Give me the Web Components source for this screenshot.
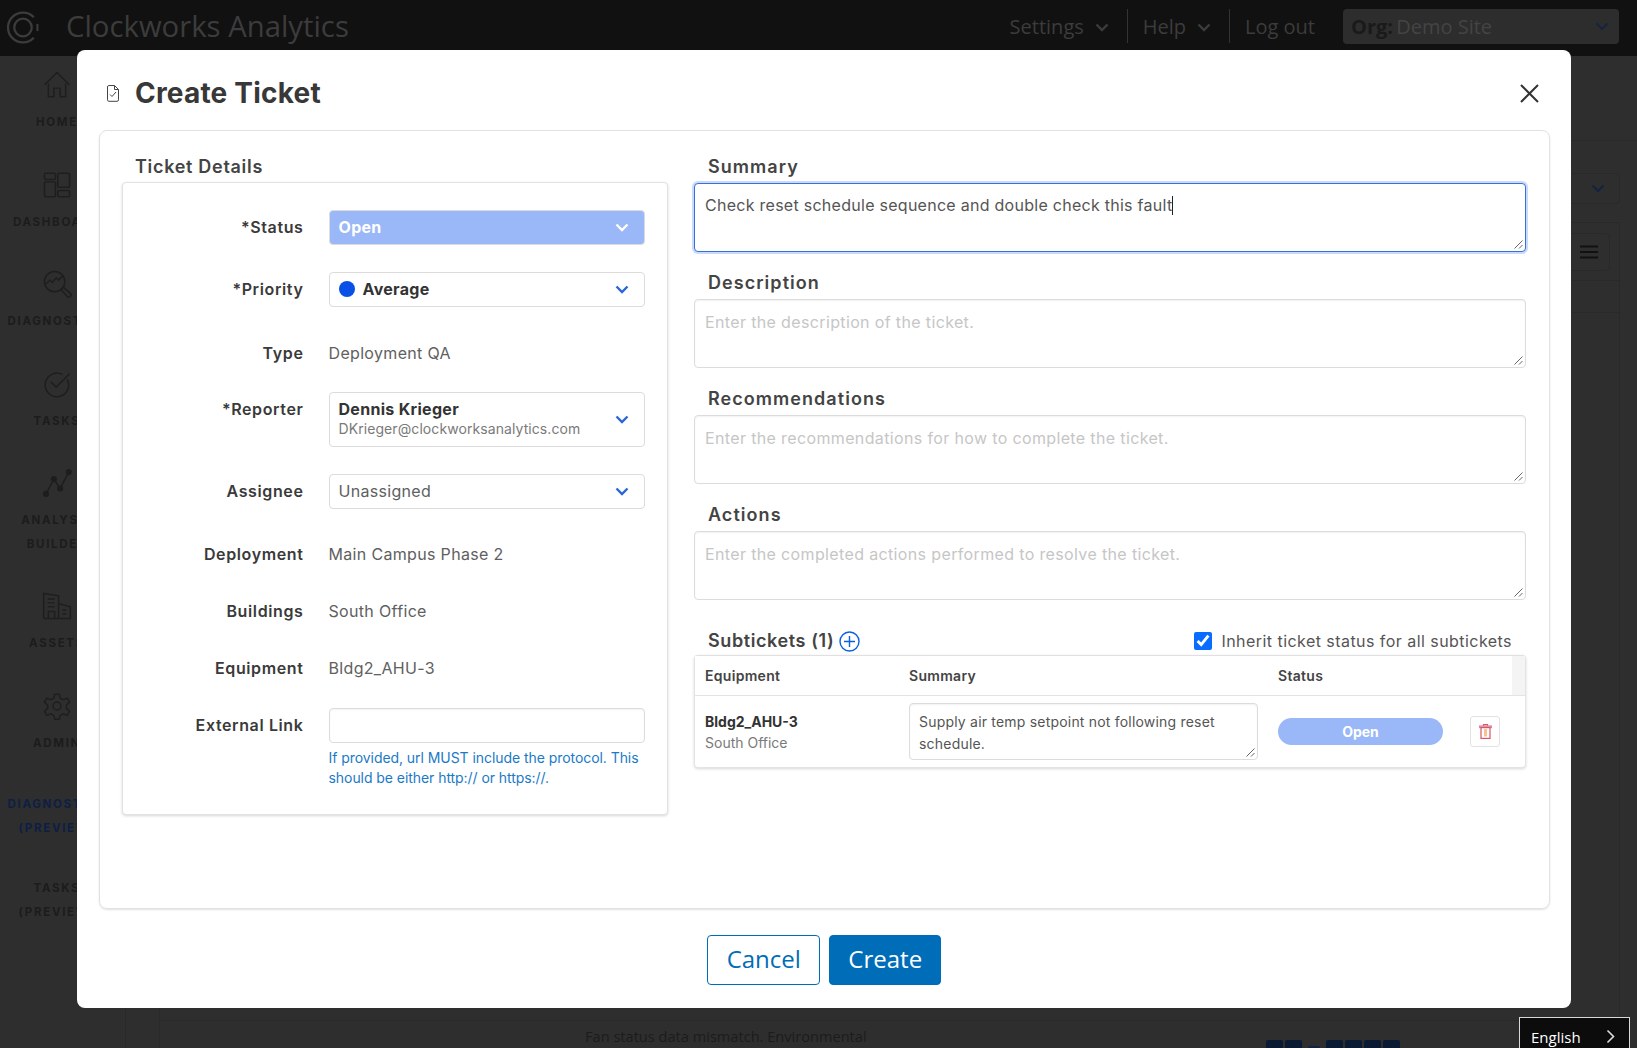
<!doctype html>
<html>
<head>
<meta charset="utf-8">
<title>Create Ticket</title>
<style>
  html, body { margin: 0; height: 100%; overflow: hidden; background: #2e2e2e; }
  body { font-family: Inter, "Liberation Sans", sans-serif; }
</style>
</head>
<body>
<app-shell>
  <ticket-modal></ticket-modal>
</app-shell>

<script>
class ShadowEl extends HTMLElement {
  connectedCallback() {
    if (this.shadowRoot) return
    this.attachShadow({ mode: 'open' })
    this.shadowRoot.innerHTML = `<style>${this.css()}</style>${this.html()}`
  }
  attr(name, fallback = '') {
    return this.getAttribute(name) || fallback
  }
}

const chevron = (color, width = 2.4) => `
  <svg width="14" height="9" viewBox="0 0 14 9" fill="none" stroke="${color}" stroke-width="${width}">
    <path d="M1.5 1.5 7 7l5.5-5.5"/>
  </svg>`

const sideIcons = {
  home: '<path d="M2 18 18 2l16 16M7 16v17h7V22h8v11h7V16"/>',
  dashboard: '<rect x="2" y="3" width="14" height="8" rx="1.5"/><rect x="2" y="14" width="14" height="19" rx="1.5"/><rect x="19" y="3" width="15" height="18" rx="1.5"/><rect x="19" y="25" width="15" height="8" rx="1.5"/>',
  diagnostics: '<circle cx="15" cy="15" r="13"/><path d="M4 18l5-5 3 3 5-6 3 3 6-6M23 25l3-3 9 8a2 2 0 0 1-4 4z"/>',
  tasks: '<path d="M31 12a15 15 0 1 1-6-6"/><path d="M10 15l7 7L34 5"/>',
  analysis: '<circle cx="4" cy="32" r="3" fill="#1e1e1e"/><circle cx="14" cy="13" r="3" fill="#1e1e1e"/><circle cx="22" cy="25" r="3" fill="#1e1e1e"/><circle cx="33" cy="4" r="3" fill="#1e1e1e"/><path d="M4 32 14 13l8 12L33 4"/>',
  assets: '<path d="M1 34V2l19 3v29M20 15l15 4v15H1M7 34v-9h8v9M6 9h9M6 14h9M6 19h9M25 23h5M25 28h5"/>',
  admin: '<circle cx="18" cy="18" r="5"/><path d="M15 3h6l1 5 4 2 5-2 3 5-4 4v4l4 4-3 5-5-2-4 2-1 5h-6l-1-5-4-2-5 2-3-5 4-4v-4l-4-4 3-5 5 2 4-2z"/>'
}

customElements.define('side-item', class extends ShadowEl {
  css() {
    return `
      :host { display: flex; flex-direction: column; align-items: center; width: 114px; }
      svg { display: block; margin-bottom: 8px; }
      .label {
        font: 700 11.5px/23.5px Inter, sans-serif; letter-spacing: 1.7px; color: var(--label, #1c1c1c);
        text-align: center; white-space: nowrap;
      }
    `
  }
  html() {
    const icon = sideIcons[this.attr('icon')]
    const lines = this.attr('label').split('|')
    return `
      ${icon ? `<svg width="36" height="36" viewBox="-5 -5 46 46" fill="none" stroke="#1e1e1e" stroke-width="1.9">${icon}</svg>` : ''}
      ${lines.map((line) => `<div class="label">${line}</div>`).join('')}
    `
  }
})

customElements.define('top-bar', class extends ShadowEl {
  css() {
    return `
      :host {
        display: flex; align-items: center; box-sizing: border-box; height: 56px; padding-bottom: 4px; background: #111;
        color: #3c3c3c; font: 400 20px "Open Sans", sans-serif;
      }
      .logo { margin: 3px 0 0 7px; }
      .brand { margin-left: 26px; font: 400 29.3px "Open Sans", sans-serif; }
      .spacer { flex: 1; }
      .item { display: flex; align-items: center; gap: 11px; }
      .item svg { margin-top: 3px; }
      .rule { width: 1px; height: 34px; background: #333; margin: 0 15px 0 18px; }
      .org {
        display: flex; align-items: center; justify-content: space-between; box-sizing: border-box;
        width: 276px; height: 35px; margin: 0 18px 0 28px; padding: 0 10px 0 8px; background: #2d2d2d;
        border-radius: 4px; color: #444;
      }
      .org b { color: #1a1a1a; margin-right: -2px; }
    `
  }
  html() {
    return `
      <svg class="logo" width="33" height="33" viewBox="0 0 32 32" fill="none" stroke="#3c3c3c" stroke-width="2.2">
        <path d="M26 26A14.5 14.5 0 1 1 26 6"/>
        <path d="M29.5 12.5v7" stroke-width="2"/>
        <circle cx="15.5" cy="16" r="8.5"/>
      </svg>
      <div class="brand">Clockworks Analytics</div>
      <div class="spacer"></div>
      <div class="item">Settings ${chevron('#3c3c3c')}</div>
      <div class="rule"></div>
      <div class="item">Help ${chevron('#3c3c3c')}</div>
      <div class="rule"></div>
      <div class="item">Log out</div>
      <div class="org"><span><b>Org:</b> Demo Site</span>${chevron('#14233f', 1.8)}</div>
    `
  }
})

customElements.define('page-behind', class extends ShadowEl {
  css() {
    return `
      :host { display: flex; flex-direction: column; flex: 1; min-width: 0; border-left: 1px solid #292929; }
      .head { height: 84px; border-bottom: 1px solid #292929; flex: none; }
      .filter { display: flex; justify-content: flex-end; height: 81px; flex: none; padding: 32px 17px 0 0; box-sizing: border-box; }
      .select {
        display: flex; align-items: center; justify-content: flex-end; width: 300px; height: 31px;
        padding-right: 14px; box-sizing: border-box; border: 1px solid #292929; border-radius: 4px;
      }
      .panel {
        flex: 1; display: flex; flex-direction: column; margin: 0 17px 0 33px;
        border: 1px solid #292929; border-bottom: 0;
      }
      .tools { height: 57px; display: flex; justify-content: flex-end; align-items: center; padding-right: 9px; border-bottom: 1px solid #292929; flex: none; }
      .menu {
        width: 60px; height: 38px; box-sizing: border-box; padding-right: 11px; border: 1px solid #292929; border-radius: 4px;
        display: flex; align-items: center; justify-content: flex-end;
      }
      .row { height: 31px; border-bottom: 1px solid #292929; flex: none; }
      .spacer { flex: 1; }
      .last {
        height: 27px; flex: none; border-top: 1px solid #292929; display: flex; position: relative;
        padding-left: 425px; color: #1c1c1c; font: 400 14.6px/31px "Open Sans", sans-serif; white-space: nowrap;
      }
      .blocks { display: flex; gap: 2px; margin: 19px 0 0 399px; }
      .blocks i { display: block; width: 17px; height: 12px; background: #0b1a33; border-radius: 2px 2px 0 0; }
      .blocks i.dash { height: 2px; width: 12px; margin: 6px 4px 0; background: #14233f; }
    `
  }
  html() {
    return `
      <div class="head"></div>
      <div class="filter"><div class="select">${chevron('#14233f', 2.2)}</div></div>
      <div class="panel">
        <div class="tools">
          <div class="menu">
            <svg width="18" height="14" viewBox="0 0 18 14" stroke="#111" stroke-width="2.2"><path d="M0 1.5h18M0 7h18M0 12.5h18"/></svg>
          </div>
        </div>
        <div class="row"></div>
        <div class="spacer"></div>
        <div class="last">
          <span>Fan status data mismatch. Environmental</span>
          <div class="blocks"><i></i><i></i><i class="dash"></i><i></i><i></i><i></i><i></i></div>
        </div>
      </div>
    `
  }
})

customElements.define('lang-tab', class extends ShadowEl {
  css() {
    return `
      :host {
        position: absolute; right: 7px; bottom: 0; box-sizing: border-box; width: 111px; height: 31px;
        display: flex; align-items: center; justify-content: space-between; padding: 7px 14px 0 11px;
        background: #0c0c0c; border: 1px solid #d8d8d8; border-bottom: 0; color: #fff;
        font: 400 15px "Open Sans", sans-serif;
      }
    `
  }
  html() {
    return `English
      <svg width="9" height="15" viewBox="0 0 9 15" fill="none" stroke="#ddd" stroke-width="1.6"><path d="M1.5 1.5 7.5 7.5l-6 6"/></svg>`
  }
})

customElements.define('app-shell', class extends ShadowEl {
  css() {
    return `
      :host { display: flex; flex-direction: column; height: 1048px; position: relative; overflow: hidden; background: #2e2e2e; }
      .body { flex: 1; display: flex; min-height: 0; }
      nav { width: 125px; flex: none; display: flex; flex-direction: column; gap: 32px; padding-top: 11px; box-sizing: border-box; }
      .preview { margin-top: 6px; --label: #0d1f44; }
      .preview-tasks { margin-top: 5px; }
    `
  }
  html() {
    return `
      <top-bar></top-bar>
      <div class="body">
        <nav>
          <side-item icon="home" label="HOME"></side-item>
          <side-item icon="dashboard" label="DASHBOARD"></side-item>
          <side-item icon="diagnostics" label="DIAGNOSTICS"></side-item>
          <side-item icon="tasks" label="TASKS"></side-item>
          <side-item icon="analysis" label="ANALYSIS|BUILDER"></side-item>
          <side-item icon="assets" label="ASSETS"></side-item>
          <side-item icon="admin" label="ADMIN"></side-item>
          <side-item class="preview" label="DIAGNOSTICS|(PREVIEW)"></side-item>
          <side-item class="preview-tasks" label="TASKS|(PREVIEW)"></side-item>
        </nav>
        <page-behind></page-behind>
      </div>
      <lang-tab></lang-tab>
      <slot></slot>
    `
  }
})

customElements.define('select-box', class extends ShadowEl {
  css() {
    return `
      :host {
        display: flex; align-items: center; box-sizing: border-box; height: 100%; padding: 0 15px 0 9px;
        border: 1px solid #dcdcdc; border-radius: 4px; background: #fff; color: #606060;
        font: 400 16px Inter, sans-serif; letter-spacing: .3px;
      }
      :host([status]) { background: #9ab8f7; color: #fff; font-weight: 700; }
      .value { flex: 1; min-width: 0; margin-top: -1px; }
      svg { flex: none; }
    `
  }
  html() {
    const color = this.hasAttribute('status') ? '#fff' : '#2a66d9'
    return `<div class="value"><slot></slot></div>${chevron(color)}`
  }
})

customElements.define('ticket-field', class extends ShadowEl {
  css() {
    return `
      :host {
        display: grid; grid-template-columns: 180.5px 1fr; column-gap: 25px;
        min-height: 35px; margin-bottom: var(--after, 27px);
      }
      .label {
        text-align: right; font: 600 16px/35px Inter, sans-serif; letter-spacing: .62px; color: #3a3a3a;
      }
      .control { min-width: 0; font: 400 16px/35px Inter, sans-serif; letter-spacing: .33px; color: #606060; }
    `
  }
  html() {
    return `<div class="label">${this.attr('label')}</div><div class="control"><slot></slot></div>`
  }
})

customElements.define('note-box', class extends ShadowEl {
  css() {
    return `
      :host {
        display: block; position: relative; box-sizing: border-box; height: var(--h, 69px);
        padding: 10px 10px 0; border: 1px solid #dcdcdc; border-radius: 4px; background: #fff;
        box-shadow: inset 0 1px 2px rgba(0,0,0,.06); white-space: pre-wrap;
        font: 400 16px/24px Inter, sans-serif; letter-spacing: .36px; color: #c6c6c6;
      }
      :host([filled]) { color: #555; letter-spacing: .27px; }
      :host([focused]) { border-color: #3a6fd8; box-shadow: 0 0 0 2px #c9dbfa; padding-top: 9px; }
      .caret { display: inline-block; width: 1px; height: 19px; background: #222; vertical-align: -4px; }
      .grip { position: absolute; right: 1px; bottom: 1px; display: block; }
    `
  }
  html() {
    return `<slot></slot>${this.hasAttribute('focused') ? '<span class="caret"></span>' : ''}
      <svg class="grip" width="11" height="11" viewBox="0 0 11 11" fill="none" stroke="#666" stroke-width="1">
        <path d="M1.5 9.5l8-8M6 9.5 9.5 6"/>
      </svg>`
  }
})

customElements.define('text-section', class extends ShadowEl {
  css() {
    return `
      :host { display: block; margin-bottom: 19px; }
      .label { height: 24px; padding: 0 14px; margin-bottom: 4px; font: 600 18px/24px Inter, sans-serif; letter-spacing: 1.05px; color: #444; }
    `
  }
  html() {
    return `<div class="label">${this.attr('label')}</div><slot></slot>`
  }
})

customElements.define('subticket-table', class extends ShadowEl {
  css() {
    return `
      :host {
        display: block; border: 1px solid #e4e4e4; border-top-color: #e0e0e0; border-radius: 4px; background: #fff;
        box-shadow: 0 1px 3px rgba(0,0,0,.16); font: 400 14px Inter, sans-serif; color: #444;
      }
      .head, .row { display: grid; grid-template-columns: 204px 369px 1fr; padding-left: 10px; }
      .head {
        height: 39px; align-items: center; border-bottom: 1px solid #e4e4e4; font-weight: 600; letter-spacing: .3px;
        background: linear-gradient(to left, #f4f4f4 13px, #fff 13px);
      }
      .row { height: 71px; align-items: center; }
      .name { font-weight: 700; color: #333; }
      .place { color: #7a7a7a; margin-top: 4px; }
      note-box {
        --h: 57px; width: 349px; padding: 7px 9px; font-size: 14px; line-height: 22px; letter-spacing: .2px;
      }
      .status { display: flex; align-items: center; }
      .pill {
        width: 165px; height: 27px; border-radius: 14px; background: #9ab8f7; color: #fff;
        font: 700 14px/27px Inter, sans-serif; text-align: center;
      }
      .trash {
        display: flex; align-items: center; justify-content: center; box-sizing: border-box;
        width: 30px; height: 31px; margin-left: 27px; border: 1px solid #e2e2e2; border-radius: 3px;
      }
    `
  }
  html() {
    return `
      <div class="head"><div>Equipment</div><div>Summary</div><div>Status</div></div>
      <div class="row">
        <div><div class="name">Bldg2_AHU-3</div><div class="place">South Office</div></div>
        <note-box filled>Supply air temp setpoint not following reset schedule.</note-box>
        <div class="status">
          <div class="pill">Open</div>
          <div class="trash">
            <svg width="13" height="15" viewBox="0 0 13 15" fill="none" stroke="#d9566a" stroke-width="1.2">
              <path d="M4.5 2V.7h4V2" />
              <rect x=".5" y="2" width="12" height="1.6" fill="#e7a0ae" stroke="#d98aa0"/>
              <rect x="2" y="3.6" width="9" height="10.8" fill="#fff"/>
              <path d="M5 5v7.5h3V5z" fill="#f6c48c" stroke="none"/>
            </svg>
          </div>
        </div>
      </div>
    `
  }
})

customElements.define('ticket-details', class extends ShadowEl {
  css() {
    return `
      :host { display: block; }
      .title { height: 24px; padding-left: 13px; margin-bottom: 3px; font: 600 18px/24px Inter, sans-serif; letter-spacing: .7px; color: #444; }
      .box {
        box-sizing: border-box; height: 633px; padding: 27px 22px 0 0; background: #fff;
        border: 1px solid #e2e2e2; border-radius: 4px; box-shadow: 0 1px 3px rgba(0,0,0,.16);
      }
      .dot { display: inline-block; width: 16px; height: 16px; border-radius: 50%; background: #0a50e6; margin-right: 8px; vertical-align: -2px; }
      .strong { font-weight: 700; color: #333; }
      .name { font-weight: 700; color: #333; line-height: 20px; }
      .mail { font-size: 14px; line-height: 20px; color: #7a7a7a; letter-spacing: .08px; }
      .input { box-sizing: border-box; height: 35px; border: 1px solid #dcdcdc; border-radius: 4px; box-shadow: inset 0 1px 2px rgba(0,0,0,.05); }
      .help { margin-top: 5px; font: 400 14px/20px Inter, sans-serif; letter-spacing: -.06px; color: #1a7ac7; }
    `
  }
  html() {
    return `
      <div class="title">Ticket Details</div>
      <div class="box">
        <ticket-field label="*Status"><select-box status>Open</select-box></ticket-field>
        <ticket-field label="*Priority" style="--after:28.5px"><select-box><span class="dot"></span><span class="strong">Average</span></select-box></ticket-field>
        <ticket-field label="Type" style="--after:21.5px">Deployment QA</ticket-field>
        <ticket-field label="*Reporter">
          <select-box style="height:55px"><div class="name">Dennis Krieger</div><div class="mail">DKrieger@clockworksanalytics.com</div></select-box>
        </ticket-field>
        <ticket-field label="Assignee" style="--after:27.5px"><select-box>Unassigned</select-box></ticket-field>
        <ticket-field label="Deployment" style="--after:22px">Main Campus Phase 2</ticket-field>
        <ticket-field label="Buildings" style="--after:22.5px">South Office</ticket-field>
        <ticket-field label="Equipment" style="--after:21.5px">Bldg2_AHU-3</ticket-field>
        <ticket-field label="External Link" style="--after:0">
          <div class="input"></div>
          <div class="help">If provided, url MUST include the protocol. This should be either http:// or https://.</div>
        </ticket-field>
      </div>
    `
  }
})

customElements.define('ticket-form', class extends ShadowEl {
  css() {
    return `
      :host { display: block; }
      .sub-head { display: flex; align-items: center; justify-content: space-between; height: 24px; padding: 0 14px; margin: 1px 0 2px; }
      .sub-title { display: flex; align-items: center; gap: 5px; font: 600 18px/24px Inter, sans-serif; letter-spacing: .6px; color: #444; }
      .inherit { display: flex; align-items: center; gap: 9px; font: 400 16px Inter, sans-serif; letter-spacing: .45px; color: #555; }
      input { width: 18px; height: 18px; margin: 0; accent-color: #0a6cff; }
    `
  }
  html() {
    return `
      <text-section label="Summary"><note-box focused filled>Check reset schedule sequence and double check this fault</note-box></text-section>
      <text-section label="Description"><note-box>Enter the description of the ticket.</note-box></text-section>
      <text-section label="Recommendations"><note-box>Enter the recommendations for how to complete the ticket.</note-box></text-section>
      <text-section label="Actions" style="margin-bottom:29px"><note-box>Enter the completed actions performed to resolve the ticket.</note-box></text-section>
      <div class="sub-head">
        <div class="sub-title">Subtickets (1)
          <svg width="21" height="21" viewBox="0 0 21 21" fill="none" stroke="#0b5fe0" stroke-width="1.4">
            <circle cx="10.5" cy="10.5" r="9.5"/><path d="M10.5 5v11M5 10.5h11"/>
          </svg>
        </div>
        <label class="inherit"><input type="checkbox" checked>Inherit ticket status for all subtickets</label>
      </div>
      <subticket-table></subticket-table>
    `
  }
})

customElements.define('action-button', class extends ShadowEl {
  css() {
    return `
      :host {
        display: flex; align-items: center; justify-content: center; box-sizing: border-box;
        width: 113px; height: 50px; padding-bottom: 4px; border: 1px solid #006db8; border-radius: 4px; background: #fff;
        color: #006db8; font: 400 24px "Open Sans", sans-serif;
      }
      :host([primary]) { width: 112px; background: #006db8; color: #fff; }
    `
  }
  html() {
    return '<slot></slot>'
  }
})

customElements.define('ticket-modal', class extends ShadowEl {
  css() {
    return `
      :host {
        position: absolute; left: 77px; top: 50px; width: 1494px; height: 958px; box-sizing: border-box;
        display: flex; flex-direction: column; padding: 0 21.5px 0 22px; background: #fff; border-radius: 8px;
      }
      header { display: flex; align-items: center; box-sizing: border-box; height: 80px; padding-top: 6px; flex: none; color: #333; }
      .doc { margin-left: 8px; }
      h1 { margin: 0 0 0 16px; flex: 1; font: 700 28px Inter, sans-serif; letter-spacing: .2px; color: #383838; }
      .close { margin-right: 11px; display: block; }
      .card {
        box-sizing: border-box; height: 779px; display: grid; grid-template-columns: 546px 832px; column-gap: 26px;
        padding: 24px 0 0 22px; border: 1px solid #e2e2e2; border-radius: 8px; box-shadow: 0 1px 2px rgba(0,0,0,.12);
      }
      footer { display: flex; justify-content: center; gap: 9px; margin-top: 26px; }
    `
  }
  html() {
    return `
      <header>
        <svg class="doc" width="12" height="17" viewBox="0 0 12 17" fill="none" stroke="#444" stroke-width="1">
          <path d="M1.8.5h5.7l4 4v10.3a1.5 1.5 0 0 1-1.5 1.5H1.8A1.5 1.5 0 0 1 .5 14.8V2A1.5 1.5 0 0 1 1.8.5z"/>
          <path d="M3 9.5l2 2 4-4.5M7.5.5v4h4"/>
        </svg>
        <h1>Create Ticket</h1>
        <svg class="close" width="19" height="19" viewBox="0 0 19 19" fill="none" stroke="#333" stroke-width="2"><path d="M1 1l17 17M18 1 1 18"/></svg>
      </header>
      <div class="card">
        <ticket-details></ticket-details>
        <ticket-form></ticket-form>
      </div>
      <footer>
        <action-button>Cancel</action-button>
        <action-button primary>Create</action-button>
      </footer>
    `
  }
})
</script>
</body>
</html>
